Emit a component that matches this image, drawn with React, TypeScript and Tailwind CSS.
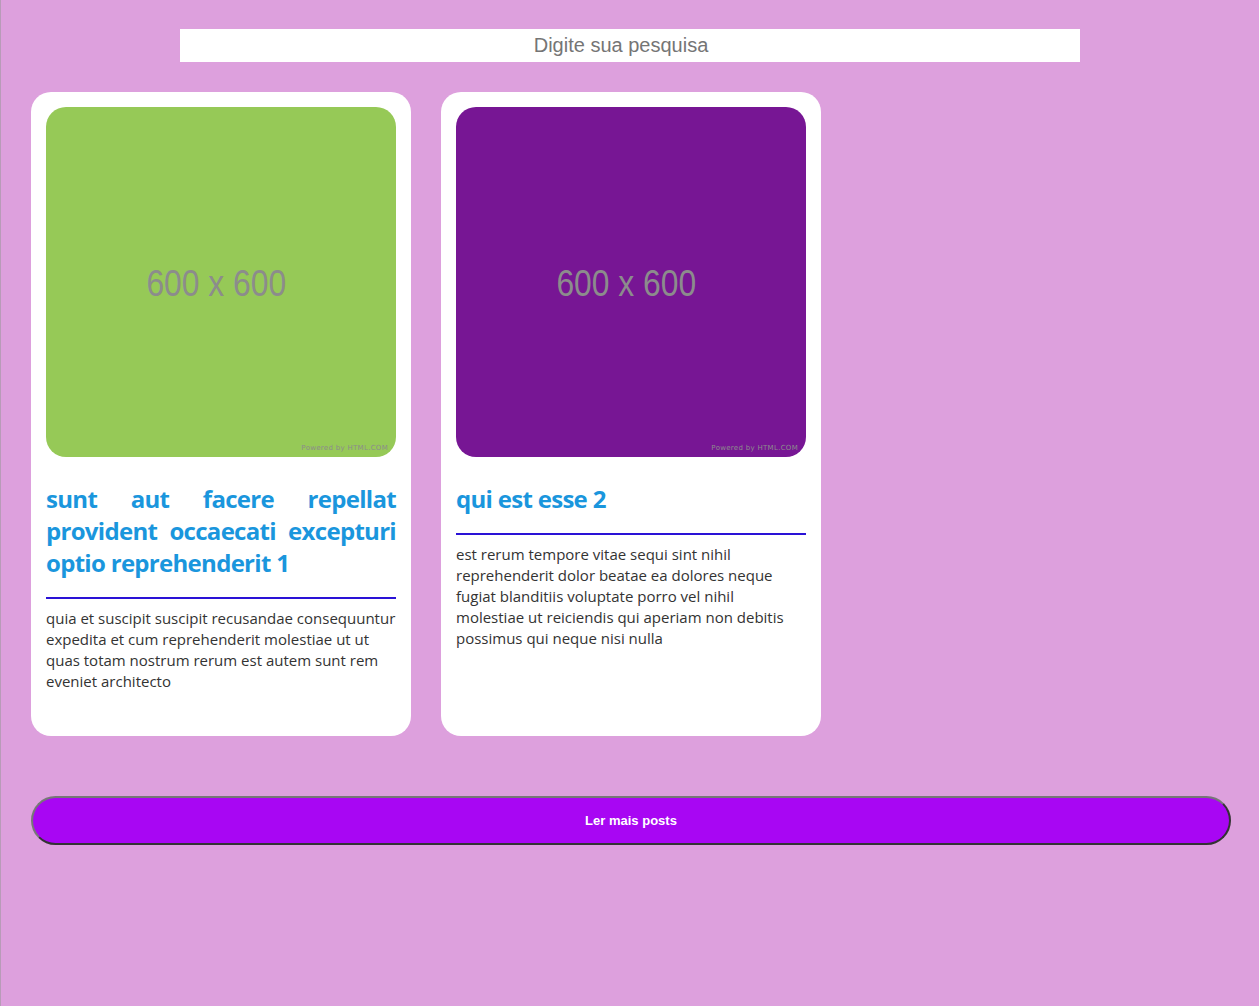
import React from "react";

const posts = [
  {
    title: "sunt aut facere repellat provident occaecati excepturi optio reprehenderit 1",
    body: "quia et suscipit suscipit recusandae consequuntur expedita et cum reprehenderit molestiae ut ut quas totam nostrum rerum est autem sunt rem eveniet architecto",
    color: "bg-[#96c957]",
    bodyPad: "pr-0",
  },
  {
    title: "qui est esse 2",
    body: "est rerum tempore vitae sequi sint nihil reprehenderit dolor beatae ea dolores neque fugiat blanditiis voluptate porro vel nihil molestiae ut reiciendis qui aperiam non debitis possimus qui neque nisi nulla",
    color: "bg-[#771694]",
    bodyPad: "pr-[2px]",
  },
];

function Card({ title, body, color, bodyPad }: { title: string; body: string; color: string; bodyPad: string }) {
  return (
    <div className="w-[380px] bg-white rounded-[20px] p-[15px] pb-[44px]">
      <div className={`relative w-[350px] h-[350px] rounded-[20px] ${color} flex items-center justify-center overflow-hidden`}>
        <span className="block text-[#8c8c8c] text-[37px] font-['Liberation_Sans',sans-serif] scale-x-[0.86] mt-[4px] -ml-[10px]">
          600 x 600
        </span>
        <span className="absolute right-[8px] bottom-[4px] text-[7px] text-[#8c8c8c] font-['DejaVu_Sans',sans-serif] tracking-[0.3px]">
          Powered by HTML.COM
        </span>
      </div>
      <h2 className="mt-[26px] text-[24px] leading-[32px] font-bold text-[#1a96dd] text-justify font-['Open_Sans',sans-serif] tracking-[-0.7px]">
        {title}
      </h2>
      <div className="mt-[18px] h-[2px] bg-[#2a12d6]" />
      <p className={`mt-[9px] text-[15px] leading-[21px] text-[#333333] font-['Open_Sans',sans-serif] ${bodyPad}`}>
        {body}
      </p>
    </div>
  );
}

export default function App() {
  return (
    <div className="min-h-screen bg-[#dda0dd] border-l border-[#b89bb8] pt-[29px] font-['Liberation_Sans',Arial,sans-serif]">
      <div className="flex justify-center">
        <input
          type="text"
          placeholder="Digite sua pesquisa"
          className="w-[900px] h-[33px] bg-white text-center text-[20px] pr-[18px] outline-none placeholder:text-[#757575] font-['Liberation_Sans',Arial,sans-serif]"
        />
      </div>
      <div className="flex gap-[30px] pl-[30px] mt-[30px]">
        {posts.map((p) => (
          <Card key={p.title} {...p} />
        ))}
      </div>
      <div className="pl-[30px] mt-[60px]">
        <button className="w-[1200px] h-[49px] rounded-full bg-[#a806f3] border-2 border-t-[#777777] border-l-[#777777] border-r-[#333333] border-b-[#333333] text-white text-[13px] font-bold font-['Liberation_Sans',Arial,sans-serif]">
          Ler mais posts
        </button>
      </div>
    </div>
  );
}
